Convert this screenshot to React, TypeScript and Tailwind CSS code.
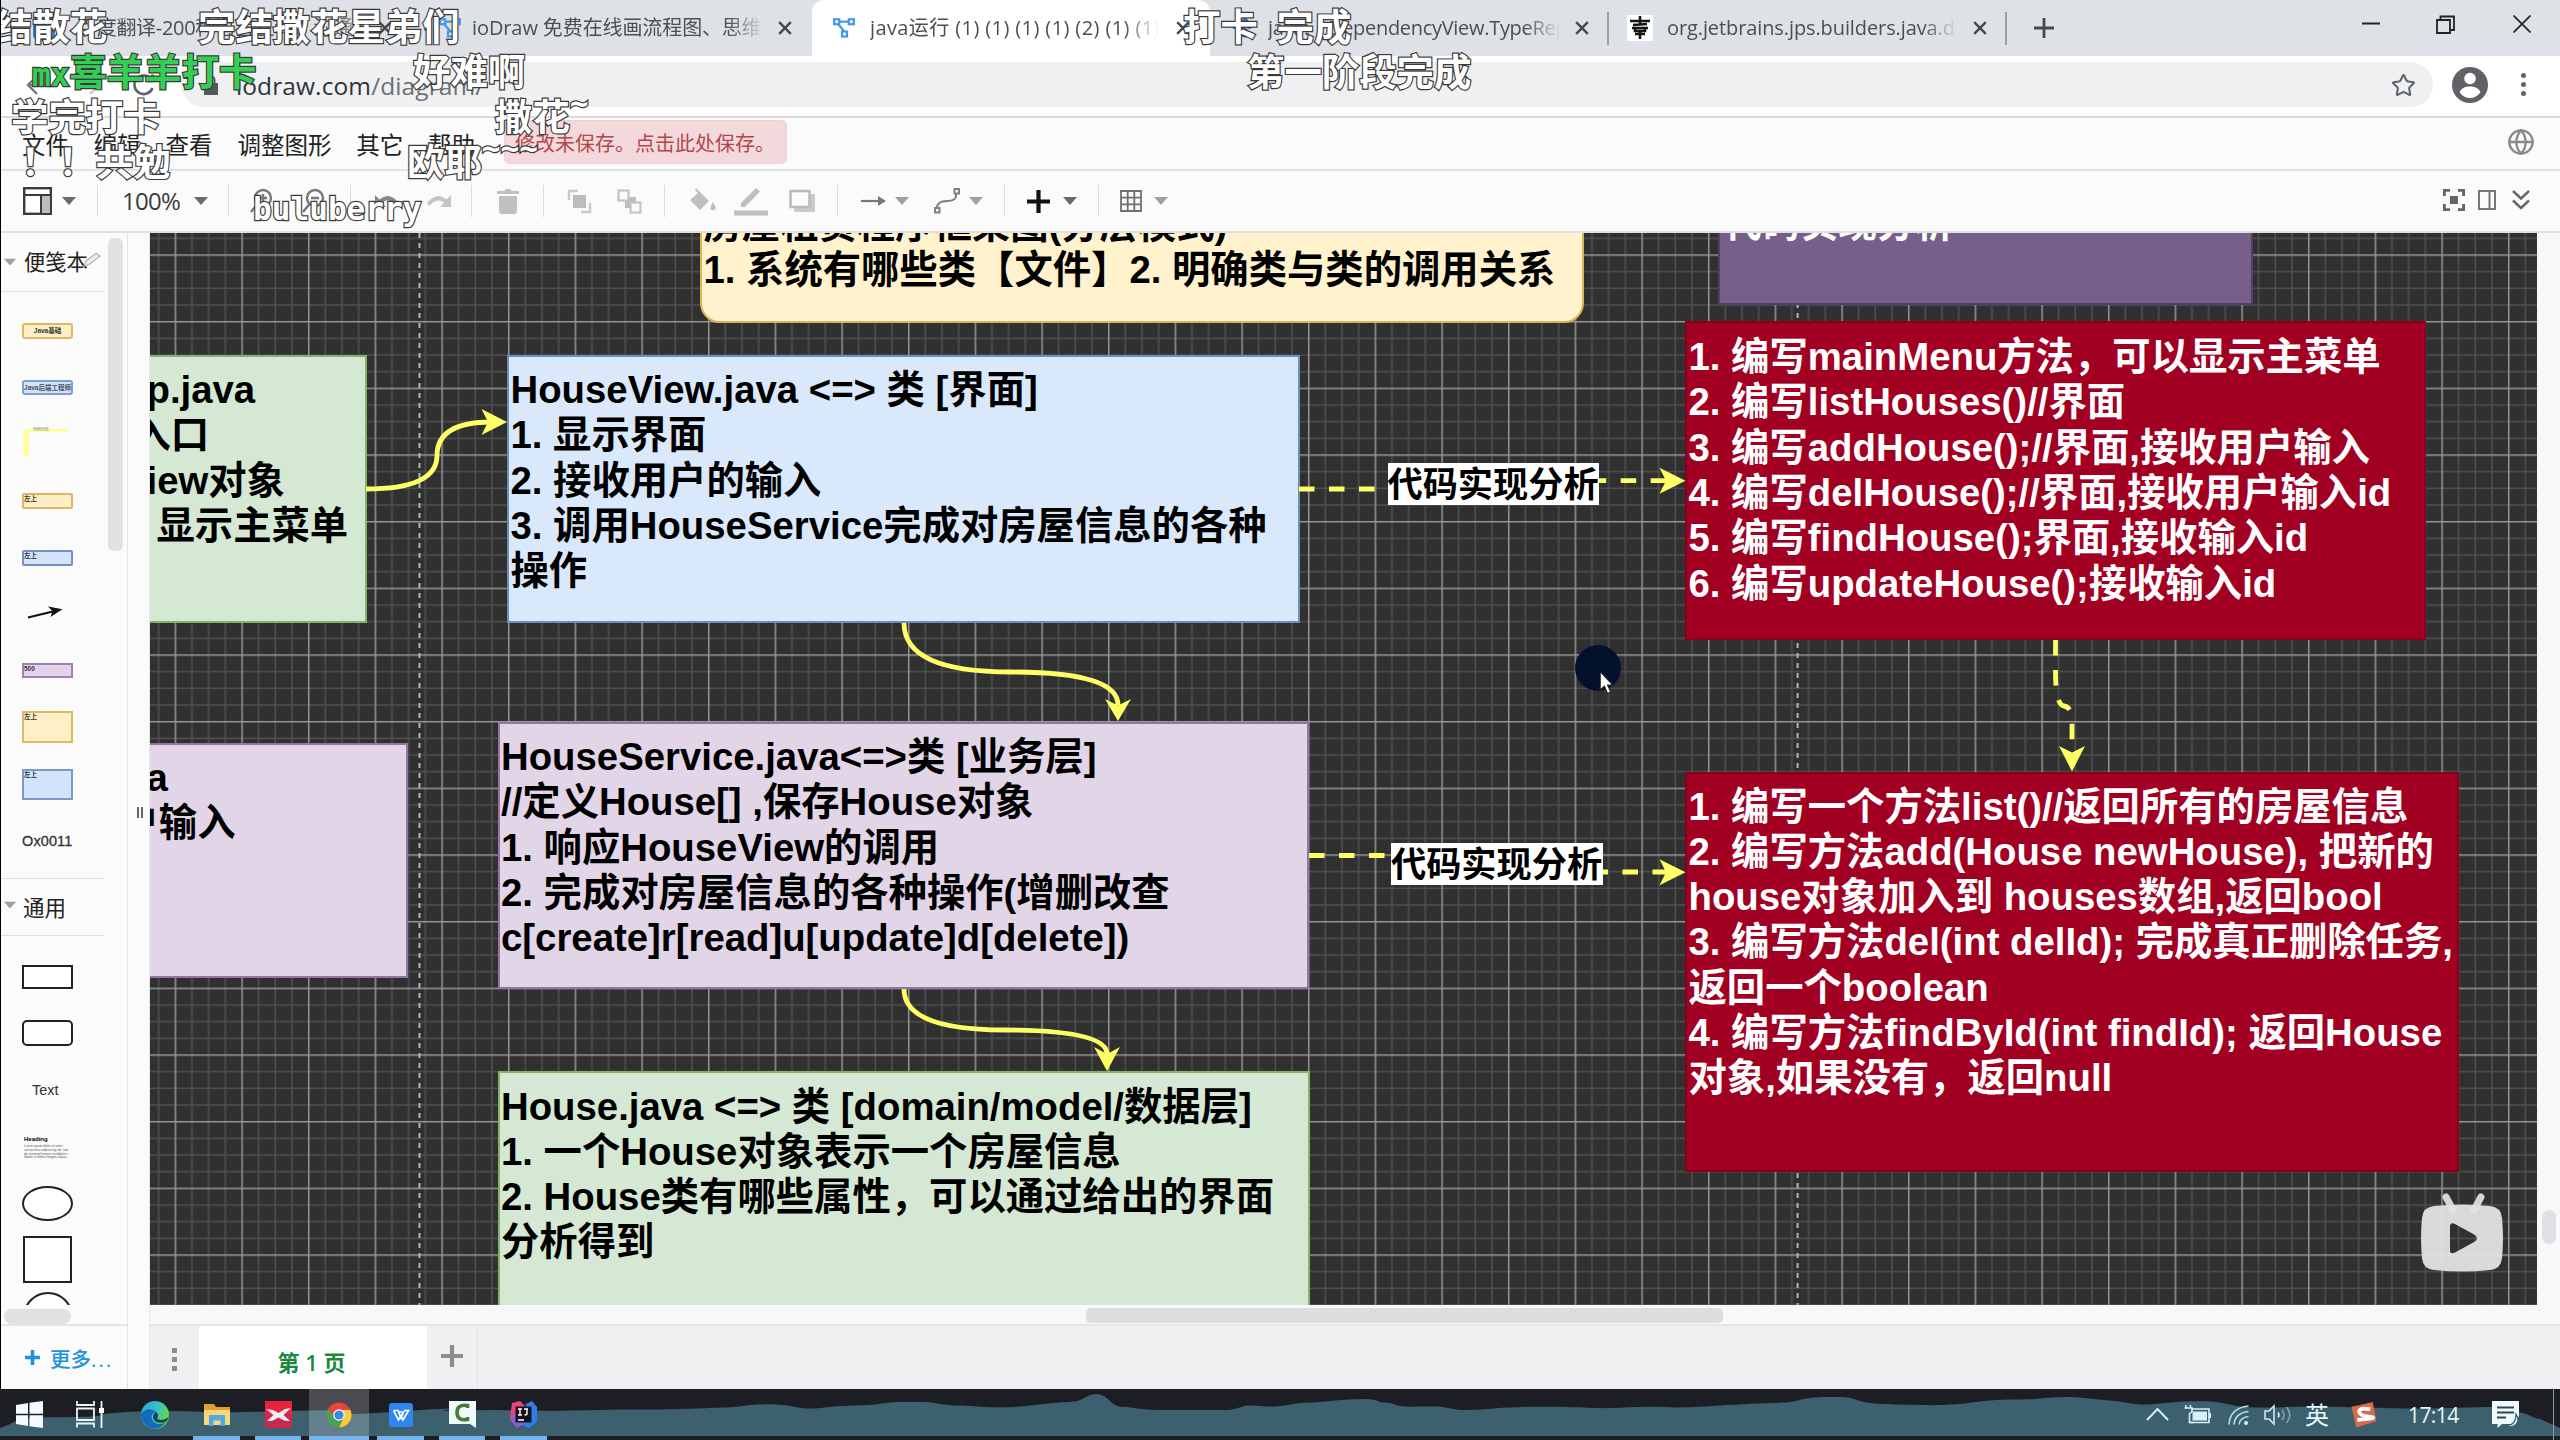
import React from "react";
import { Globe, Star } from "lucide-react";

const UI = "font-['Open_Sans','Noto_Sans_CJK_SC',sans-serif]";

/* ---------- shared bits ---------- */

function Caret({ className = "", dark = false }: { className?: string; dark?: boolean }) {
  return (
    <svg viewBox="0 0 14 8" className={`block h-[8px] w-[14px] shrink-0 ${className}`}>
      <path d="M0 0H14L7 8Z" fill={dark ? "#6b6b6b" : "#a0a0a0"} />
    </svg>
  );
}

function CloseX({ className = "" }: { className?: string }) {
  return (
    <svg viewBox="0 0 14 14" className={`block h-[14px] w-[14px] shrink-0 ${className}`}>
      <path d="M1.2 1.2L12.8 12.8M12.8 1.2L1.2 12.8" stroke="#45484c" strokeWidth="2.4" />
    </svg>
  );
}

function DrawLogo({ className = "" }: { className?: string }) {
  return (
    <svg viewBox="0 0 22 20" className={`block h-[20px] w-[22px] shrink-0 ${className}`} fill="none" stroke="#3d9be9" strokeWidth="2.2">
      <rect x="1.2" y="1.2" width="5" height="5" />
      <rect x="15.8" y="1.2" width="5" height="5" />
      <rect x="9" y="13.5" width="5" height="5" />
      <path d="M6 3.7H16M5 6L11.5 13.5" />
    </svg>
  );
}

/* ---------- browser chrome ---------- */

function TabStrip() {
  const title = "overflow-hidden whitespace-nowrap text-[20px] leading-[30px] text-[#4b4e53]";
  const fade = "[mask-image:linear-gradient(to_right,black_88%,transparent)]";
  return (
    <div className={`flex h-[56px] w-full shrink-0 bg-[#dee1e6] ${UI}`}>
      <div className="flex w-[431px] items-center">
        <div className="ml-[33px] h-[22px] w-[22px] rounded-sm bg-[#2f7fd8]" />
        <div className={`ml-[22px] w-[292px] tracking-[-0.3px] ${title} ${fade}`}>百度翻译-200种语言互译、沟通全世界</div>
        <CloseX className="ml-[9px]" />
      </div>
      <div className="flex w-[381px] items-center">
        <DrawLogo className="ml-[8px]" />
        <div className={`ml-[11px] w-[291px] tracking-[-0.1px] ${title} ${fade}`}>ioDraw 免费在线画流程图、思维导图</div>
        <CloseX className="ml-[15px]" />
      </div>
      <div className="flex w-[398px] items-center rounded-t-[12px] bg-white">
        <DrawLogo className="ml-[21px]" />
        <div className={`ml-[15px] w-[289px] tracking-[0.4px] ${title} ${fade}`}>java运行 (1) (1) (1) (1) (2) (1) (1)</div>
        <CloseX className="ml-[17px]" />
      </div>
      <div className="flex w-[397px] items-center">
        <svg viewBox="0 0 22 22" className="ml-[21px] h-[22px] w-[22px] shrink-0">
          <g fill="#2b6be0">
            <circle cx="4" cy="9" r="3" />
            <circle cx="8.5" cy="4" r="3" />
            <circle cx="14" cy="4" r="3" />
            <circle cx="18.3" cy="9" r="3" />
            <path d="M11 9C8 9 3 14 4 18C5 22 9 20 11 20S17 22 18 18C19 14 14 9 11 9Z" />
          </g>
        </svg>
        <div className={`ml-[15px] w-[292px] tracking-[-0.3px] [word-spacing:14px] ${title} ${fade}`}>java: DependencyView.TypeRepr</div>
        <CloseX className="ml-[15px]" />
      </div>
      <div className="flex w-[400px] items-center">
        <div className="h-[33px] w-[2px] bg-[#9b9ea3]" />
        <svg viewBox="0 0 26 26" className="ml-[18px] h-[26px] w-[26px] shrink-0 bg-white">
          <path d="M3 6H23M13 1V10M6 10L20 9M5 13H21M8 13V16H18V13M13 16V24M8 19H18" stroke="#151515" strokeWidth="2.6" fill="none" />
        </svg>
        <div className={`ml-[14px] w-[291px] tracking-[-0.1px] ${title} ${fade}`}>org.jetbrains.jps.builders.java.depe</div>
        <CloseX className="ml-[16px]" />
        <div className="ml-[18px] h-[33px] w-[2px] bg-[#9b9ea3]" />
      </div>
      <svg viewBox="0 0 22 22" className="ml-[26px] mt-[17px] h-[22px] w-[22px] shrink-0">
        <path d="M11 1V21M1 11H21" stroke="#45484c" strokeWidth="2.8" />
      </svg>
      <div className="ml-auto mr-[29px] mt-[15px] flex">
        <svg viewBox="0 0 18 20" className="h-[20px] w-[18px]">
          <path d="M0 8.5H18" stroke="#222" strokeWidth="2" />
        </svg>
        <svg viewBox="0 0 19 20" className="ml-[56px] h-[20px] w-[19px]" fill="none" stroke="#222" strokeWidth="1.8">
          <path d="M1 5H14V18H1ZM4.500 5V1.500H18V15H14" />
        </svg>
        <svg viewBox="0 0 18 18" className="ml-[58px] h-[18px] w-[18px]">
          <path d="M0.500 0.500L17.500 17.500M17.500 0.500L0.500 17.500" stroke="#222" strokeWidth="1.700" />
        </svg>
      </div>
    </div>
  );
}

function AddressBar() {
  return (
    <div className={`flex h-[62px] shrink-0 items-center border-b-2 border-[#dadbdd] bg-white pb-[3px] ${UI}`}>
      <div className="flex w-[181px] items-center">
        <svg viewBox="0 0 24 22" className="ml-[26px] h-[22px] w-[24px]" fill="none" stroke="#77797d" strokeWidth="2.4">
          <path d="M22 11H2M11 2L2 11L11 20" />
        </svg>
        <svg viewBox="0 0 24 22" className="ml-[27px] h-[22px] w-[24px]" fill="none" stroke="#c9cbce" strokeWidth="2.4">
          <path d="M2 11H22M13 2L22 11L13 20" />
        </svg>
        <svg viewBox="0 0 24 24" className="ml-[31px] h-[24px] w-[24px]" fill="none" stroke="#5f6368" strokeWidth="2.6">
          <path d="M20.500 15A9.300 9.300 0 1 1 19 6M20.500 1.500V8H14" />
        </svg>
      </div>
      <div className="flex h-[45px] w-[2252px] items-center rounded-full bg-[#eff0f2]">
        <svg viewBox="0 0 14 20" className="ml-[23px] h-[20px] w-[14px]">
          <rect y="8" width="14" height="12" fill="#55585c" />
          <path d="M3.500 8V5a3.500 3.500 0 0 1 7 0V8" fill="none" stroke="#55585c" strokeWidth="2" />
        </svg>
        <div className="ml-[18px] mt-[2px] whitespace-nowrap text-[24.5px] leading-[30px] tracking-[0.1px] text-[#313438]">
          iodraw.com<span className="text-[#6c7075]">/diagram/</span>
        </div>
        <Star className="ml-auto mr-[17px] mt-[2px] h-[25px] w-[25px] text-[#5f6368]" strokeWidth={2} />
      </div>
      <svg viewBox="0 0 36 36" className="ml-[19px] mt-[1px] h-[36px] w-[36px]">
        <circle cx="18" cy="18" r="18" fill="#5f6368" />
        <circle cx="18" cy="11.500" r="5.800" fill="#fff" />
        <path d="M7.500 25C10 20.500 14 19.500 18 19.500S26 20.500 28.500 25C26 29 22 31 18 31S10 29 7.500 25Z" fill="#fff" />
      </svg>
      <div className="ml-[33px] flex flex-col gap-[4.500px]">
        <div className="h-[4.500px] w-[4.500px] rounded-full bg-[#5f6368]" />
        <div className="h-[4.500px] w-[4.500px] rounded-full bg-[#5f6368]" />
        <div className="h-[4.500px] w-[4.500px] rounded-full bg-[#5f6368]" />
      </div>
    </div>
  );
}

/* ---------- editor menu and toolbar ---------- */

function MenuBar() {
  return (
    <div className={`flex h-[53px] shrink-0 items-center border-b-2 border-[#e2e2e3] bg-[#fbfbfb] ${UI}`}>
      <div className="mt-[3px] flex w-[504px] items-center gap-[24.800px] whitespace-nowrap pl-[22px] text-[23.500px] leading-[34px] text-[#222]">
        <span>文件</span>
        <span>编辑</span>
        <span>查看</span>
        <span>调整图形</span>
        <span>其它</span>
        <span>帮助</span>
      </div>
      <div className="mt-[-3px] flex h-[44px] w-[283px] items-center whitespace-nowrap rounded-[5px] border border-[#f0d0d3] bg-[#f4d9dc] pl-[10px] pt-[4px] text-[20px] leading-[30px] text-[#b2474a]">
        修改未保存。点击此处保存。
      </div>
      <Globe className="mb-[4px] ml-auto mr-[25px] h-[28px] w-[28px] text-[#8a8a8a]" strokeWidth={2} />
    </div>
  );
}

function Sep() {
  return <div className="h-[32px] w-px shrink-0 bg-[#dcdcdc]" />;
}

function Toolbar() {
  return (
    <div className={`flex h-[62px] shrink-0 items-center border-b-2 border-[#e0e0e1] bg-[#fbfbfb] ${UI}`}>
      <div className="flex w-[97px] items-center">
        <svg viewBox="0 0 29 28" className="ml-[23px] h-[28px] w-[29px]">
          <rect x="1.200" y="1.200" width="26.600" height="25.600" fill="#fff" stroke="#3c3c3c" strokeWidth="2.400" />
          <path d="M1 8H28M18 8V27" stroke="#3c3c3c" strokeWidth="2" />
          <rect x="19" y="9" width="8" height="17" fill="#bdbdbd" />
        </svg>
        <Caret dark className="ml-[10px]" />
      </div>
      <Sep />
      <div className="flex w-[130px] items-center">
        <div className="ml-[24px] w-[60px] whitespace-nowrap text-[24px] leading-[34px] tracking-[-0.700px] text-[#3a3a3a]">100%</div>
        <Caret dark className="ml-[12px]" />
      </div>
      <Sep />
      <div className="flex w-[121px] items-center">
        <svg viewBox="0 0 26 26" className="ml-[20px] h-[26px] w-[26px]" fill="none" stroke="#777" strokeWidth="2.400">
          <circle cx="14" cy="10" r="8" />
          <path d="M8.500 16L2 24M10 10H18M14 6V14" />
        </svg>
        <svg viewBox="0 0 26 26" className="ml-[26px] h-[26px] w-[26px]" fill="none" stroke="#777" strokeWidth="2.400">
          <circle cx="14" cy="10" r="8" />
          <path d="M8.500 16L2 24M10 10H18" />
        </svg>
      </div>
      <Sep />
      <div className="flex w-[120px] items-center">
        <svg viewBox="0 0 24 16" className="ml-[24px] h-[16px] w-[24px]">
          <path d="M0 2V14H11L7 10Q13 4 22 13L24 10Q14 -2 4.500 6.500Z" fill="#888" />
        </svg>
        <svg viewBox="0 0 24 16" className="ml-[28px] h-[16px] w-[24px]">
          <path d="M24 2V14H13L17 10Q11 4 2 13L0 10Q10 -2 19.500 6.500Z" fill="#c4c4c4" />
        </svg>
      </div>
      <Sep />
      <div className="flex w-[71px] justify-center">
        <svg viewBox="0 0 24 26" className="h-[26px] w-[24px]" fill="#c0c0c0">
          <path d="M1 3H8L10 1H14L16 3H23V6H1ZM3 8H21V23Q21 26 18 26H6Q3 26 3 23Z" />
        </svg>
      </div>
      <Sep />
      <div className="flex w-[120px] items-center">
        <svg viewBox="0 0 25 25" className="ml-[23px] h-[25px] w-[25px]">
          <path d="M2 11V2H11M14 23H23V14" fill="none" stroke="#c9c9c9" strokeWidth="2.400" />
          <rect x="6" y="6" width="13" height="13" fill="#bdbdbd" />
        </svg>
        <svg viewBox="0 0 25 25" className="ml-[25px] h-[25px] w-[25px]">
          <rect x="8" y="8" width="11" height="11" fill="#bdbdbd" />
          <rect x="1.500" y="1.500" width="10" height="10" fill="#fbfbfb" stroke="#c4c4c4" strokeWidth="2.200" />
          <rect x="13.500" y="13.500" width="10" height="10" fill="#fbfbfb" stroke="#c4c4c4" strokeWidth="2.200" />
        </svg>
      </div>
      <Sep />
      <div className="flex w-[172px] items-center">
        <svg viewBox="0 0 28 26" className="ml-[24px] h-[26px] w-[28px]" fill="#bfbfbf">
          <path d="M7 0L20 13L11 22L1 12L9 5L6 2ZM24 14Q28 20 26 21.500Q24 23 22 21.500Q20.500 20 24 14Z" />
        </svg>
        <svg viewBox="0 0 34 30" className="ml-[17px] h-[30px] w-[34px]" fill="#bfbfbf">
          <path d="M7 21V17L22 2L26 5.500L11 21Z" />
          <rect y="24.500" width="34" height="5" />
        </svg>
        <svg viewBox="0 0 26 24" className="ml-[21px] h-[24px] w-[26px]">
          <rect x="5" y="5" width="21" height="18" fill="#c9c9c9" />
          <rect x="1.500" y="2" width="19" height="16" fill="#fbfbfb" stroke="#bcbcbc" strokeWidth="2.600" />
        </svg>
      </div>
      <Sep />
      <div className="flex w-[166px] items-center">
        <svg viewBox="0 0 25 10" className="ml-[23px] h-[10px] w-[25px]">
          <path d="M0 5H20" stroke="#777" strokeWidth="2.200" />
          <path d="M17 0L25 5L17 10Z" fill="#777" />
        </svg>
        <Caret className="ml-[9px]" />
        <svg viewBox="0 0 26 26" className="ml-[25px] h-[26px] w-[26px]" fill="none" stroke="#808080" strokeWidth="2">
          <rect x="1" y="20" width="4.500" height="4.500" />
          <rect x="20.500" y="1" width="4.500" height="4.500" />
          <path d="M3 20Q3 13 13 13T22 6" />
        </svg>
        <Caret className="ml-[9px]" />
      </div>
      <Sep />
      <div className="flex w-[93px] items-center">
        <svg viewBox="0 0 23 23" className="ml-[22px] h-[23px] w-[23px]">
          <path d="M11.500 0V23M0 11.500H23" stroke="#111" strokeWidth="4.200" />
        </svg>
        <Caret dark className="ml-[13px]" />
      </div>
      <Sep />
      <svg viewBox="0 0 22 22" className="ml-[21px] h-[22px] w-[22px]" fill="none" stroke="#707070" strokeWidth="1.800">
        <path d="M1 1H21V21H1ZM1 7.700H21M1 14.300H21M7.700 1V21M14.300 1V21" />
      </svg>
      <Caret className="ml-[12px]" />
      <svg viewBox="0 0 22 22" className="ml-auto h-[22px] w-[22px] -translate-y-px" fill="none" stroke="#666" strokeWidth="2.800">
        <path d="M1.400 7V1.400H7M15 1.400H20.600V7M20.600 15V20.600H15M7 20.600H1.400V15" />
        <rect x="7" y="7" width="8" height="8" fill="#666" stroke="none" />
      </svg>
      <svg viewBox="0 0 18 20" className="ml-[13px] h-[20px] w-[18px] -translate-y-px" fill="none" stroke="#777" strokeWidth="2">
        <path d="M1 1H17V19H1ZM11.500 1V19" />
      </svg>
      <svg viewBox="0 0 18 20" className="ml-[16px] mr-[30px] h-[20px] w-[18px] -translate-y-px" fill="none" stroke="#666" strokeWidth="2.400">
        <path d="M1 1L9 8.500L17 1M1 10.500L9 18L17 10.500" />
      </svg>
    </div>
  );
}

/* ---------- shape palette ---------- */

function Slot({ children }: { children: React.ReactNode }) {
  return <div className="flex h-[56.600px] shrink-0 items-center pl-[22px]">{children}</div>;
}

const mini = "overflow-hidden whitespace-nowrap text-[6.500px] font-bold leading-[8px] text-[#333] font-['Liberation_Sans','Noto_Sans_CJK_SC',sans-serif]";

function Sidebar() {
  return (
    <div className={`flex w-[128px] shrink-0 flex-col border-r border-[#e4e4e6] bg-[#fbfbfb] ${UI}`}>
      <div className="flex h-[1093px] border-b-2 border-[#e4e4e6]">
        <div className="flex w-[104px] flex-col">
          <div className="flex h-[1072px] flex-col overflow-hidden">
            <div className="flex h-[59px] shrink-0 items-center border-b border-[#dedee0] pl-[3px]">
              <Caret className="scale-90" />
              <div className="ml-[7px] mt-[-1px] whitespace-nowrap text-[21.300px] leading-[32px] text-[#222]">便笺本</div>
              <svg viewBox="0 0 18 16" className="ml-[-5px] mt-[-4px] h-[16px] w-[18px] shrink-0" fill="#f0f0f0" stroke="#b4b4b4" strokeWidth="1.300">
                <path d="M1 14L3 9L13 1.500L17 4L6 12.500Z" />
              </svg>
            </div>
            <div className="h-[11px] shrink-0" />
            <Slot>
              <div className={`flex h-[16px] w-[51px] items-center justify-center rounded-[3px] border-2 border-[#dfbb5f] bg-[#fff0c6] ${mini}`}>Java基础</div>
            </Slot>
            <Slot>
              <div className={`flex h-[15px] w-[51px] items-center justify-center rounded-[3px] border-2 border-[#7f9fd0] bg-[#d3e3fb] text-[#456] ${mini}`}>Java后端工程师</div>
            </Slot>
            <Slot>
              <svg viewBox="0 0 50 34" className="h-[34px] w-[50px]">
                <rect x="1" y="3" width="6" height="27" fill="#ffffa0" />
                <rect x="4" y="2" width="43" height="2.500" fill="#ffff8c" />
                <text x="11" y="4" fontSize="4" fill="#777" fontFamily="Noto Sans CJK SC">代码分析</text>
              </svg>
            </Slot>
            <Slot>
              <div className={`h-[16px] w-[51px] rounded-[2px] border-2 border-[#dcb466] bg-[#ffedc4] ${mini}`}>左上</div>
            </Slot>
            <Slot>
              <div className={`h-[16px] w-[51px] rounded-[2px] border-2 border-[#7591c4] bg-[#d4e2fb] ${mini}`}>左上</div>
            </Slot>
            <Slot>
              <svg viewBox="0 0 36 14" className="ml-[5px] mt-[-3px] h-[14px] w-[36px]">
                <path d="M1 11.500L28 5" stroke="#111" strokeWidth="2.200" />
                <path d="M35.500 3.200L21 0.500L25.500 5.300L23.500 11Z" fill="#111" />
              </svg>
            </Slot>
            <Slot>
              <div className={`h-[15px] w-[51px] border-2 border-[#9f80ae] bg-[#e3d3ea] ${mini}`}>500</div>
            </Slot>
            <Slot>
              <div className={`h-[32px] w-[51px] border-2 border-[#dcbb60] bg-[#fff0c8] ${mini}`}>左上</div>
            </Slot>
            <Slot>
              <div className={`h-[31px] w-[51px] border-2 border-[#7d9ac4] bg-[#d2e4fb] ${mini}`}>左上</div>
            </Slot>
            <Slot>
              <div className="whitespace-nowrap text-[14.500px] leading-[20px] tracking-[0.1px] text-[#333] [-webkit-text-stroke:0.3px_#333] font-['Liberation_Sans',sans-serif]">Ox0011</div>
            </Slot>
            <div className="h-[10px] shrink-0 border-b border-[#dedee0]" />
            <div className="flex h-[57.500px] shrink-0 items-center border-b border-[#dedee0] pl-[3px]">
              <Caret className="-mt-1 scale-90" />
              <div className="ml-[6px] mt-[1px] whitespace-nowrap text-[21.500px] leading-[32px] text-[#222]">通用</div>
            </div>
            <div className="h-[12px] shrink-0" />
            <Slot>
              <div className="h-[24px] w-[51px] border-2 border-[#222] bg-white" />
            </Slot>
            <Slot>
              <div className="h-[26px] w-[51px] rounded-[5px] border-2 border-[#222] bg-white" />
            </Slot>
            <Slot>
              <div className="ml-[10px] text-[14.500px] leading-[20px] text-[#333] font-['Liberation_Sans',sans-serif]">Text</div>
            </Slot>
            <Slot>
              <div className="ml-[2px] mt-[2px] w-[44px] overflow-hidden whitespace-nowrap font-['Liberation_Sans',sans-serif]">
                <div className="text-[6px] font-bold leading-[8px] text-black">Heading</div>
                <div className="mt-[2px] text-[3.200px] leading-[3.800px] text-[#555]">
                  Lorem ipsum dolor sit amet,
                  <br />
                  consectetur adipisicing elit, sed
                  <br />
                  do eiusmod tempor incididunt ut
                  <br />
                  labore et dolore magna aliqua.
                </div>
              </div>
            </Slot>
            <Slot>
              <div className="h-[35px] w-[51px] rounded-[50%] border-2 border-[#222] bg-white" />
            </Slot>
            <Slot>
              <div className="ml-[1px] h-[47px] w-[49px] border-2 border-[#222] bg-white" />
            </Slot>
            <div className="ml-[23px] mt-[4px] h-[50px] w-[50px] shrink-0 rounded-full border-2 border-[#222] bg-white" />
          </div>
          <div className="ml-[4px] mt-[4px] h-[15px] w-[67px] rounded-full bg-[#e0e0e0]" />
        </div>
        <div className="ml-[4px] mt-[5px] h-[313px] w-[15px] rounded-[6px] bg-[#e1e1e1]" />
      </div>
      <div className="flex h-[63px] items-center whitespace-nowrap pl-[25px] text-[20.500px] font-medium leading-[30px] text-[#2191de]">
        <svg viewBox="0 0 15 15" className="mr-[10px] h-[15px] w-[15px]">
          <path d="M7.500 0V15M0 7.500H15" stroke="#2191de" strokeWidth="3.600" />
        </svg>
        <span className="mt-[2px]">更多<span className="tracking-[2px]">...</span></span>
      </div>
    </div>
  );
}

/* ---------- diagram canvas ---------- */

const block = "absolute whitespace-nowrap border-2 pl-[1.500px] text-[38.350px] font-bold leading-[45.330px] font-['Liberation_Sans','Noto_Sans_CJK_SC',sans-serif]";

function Lines({ rows }: { rows: string[] }) {
  return (
    <>
      {rows.map((r) => (
        <div key={r}>{r}</div>
      ))}
    </>
  );
}

function Grid() {
  return (
    <svg className="absolute inset-0 h-full w-full">
      <defs>
        <pattern id="grid" x="24.600" y="21.300" width="66.667" height="66.667" patternUnits="userSpaceOnUse">
          <path d="M17.370 0V66.700M34.030 0V66.700M50.700 0V66.700M0 17.370H66.700M0 34.030H66.700M0 50.700H66.700" stroke="#505050" strokeWidth="1.500" />
          <path d="M0.800 0V66.700M0 0.800H66.700" stroke="#969696" strokeWidth="1.500" />
        </pattern>
      </defs>
      <rect width="100%" height="100%" fill="#303030" />
      <rect width="100%" height="100%" fill="url(#grid)" />
      <path d="M269.500 0V1072M1647.600 0V1072" stroke="#b4b4b4" strokeWidth="2" strokeDasharray="5 5" />
    </svg>
  );
}

function Edges() {
  return (
    <svg viewBox="150 233 2387 1072" className="absolute inset-0 h-full w-full" fill="none">
      <g stroke="#ffff66" strokeWidth="4.800">
        <path d="M366 489Q437 489 437 455.500Q437 422 492 422" />
        <path d="M904 623Q904 672 1010.700 672Q1118 672 1118 705" />
        <path d="M904 989Q904 1030 1005 1030Q1107 1030 1107 1054" />
        <path d="M1299 489H1492V480.700H1668" strokeDasharray="15.500 14.500" />
        <path d="M1309 855.500H1497V872H1668" strokeDasharray="15.500 14.500" />
        <path d="M2055.500 640V672Q2055.500 705 2064 706Q2072 707 2072 722V754" strokeDasharray="15.500 14.500" />
      </g>
      <g fill="#ffff66">
        <path d="M507 422L481.500 409L488 422L481.500 435Z" />
        <path d="M1118 721L1105 699L1118 705.500L1131 699Z" />
        <path d="M1107 1071L1094 1047L1107 1054L1120 1047Z" />
        <path d="M1685.500 480.700L1659.500 467.700L1666 480.700L1659.500 493.700Z" />
        <path d="M1685.500 872.300L1659.500 859.300L1666 872.300L1659.500 885.300Z" />
        <path d="M2072 771.500L2059 746L2072 752.500L2085 746Z" />
      </g>
    </svg>
  );
}

const edgeLabel = "absolute h-[42px] w-[211.500px] whitespace-nowrap bg-white text-[35.200px] font-bold leading-[37px] text-black font-['Noto_Sans_CJK_SC',sans-serif]";

function Canvas() {
  return (
    <div className="relative h-[1072px] w-[2387px] overflow-hidden bg-[#303030]">
      <Grid />
      <div className={`${block} left-[550px] top-[-60px] h-[150px] w-[884px] rounded-[20px] border-[#d6b656] bg-[#fff2cc] pt-[26.500px] text-black`}>
        <Lines rows={["房屋租赁程序框架图(分层模式)", "1. 系统有哪些类【文件】2. 明确类与类的调用关系"]} />
      </div>
      <div className={`${block} left-[1568px] top-[-60px] h-[132px] w-[535px] border-[#563c6d] bg-[#76608a] pt-[25.500px] text-white`}>
        <div className="ml-[2px]">代码实现分析</div>
      </div>
      <div className={`${block} left-[-300px] top-[121.500px] h-[268px] w-[517px] border-[#82b366] bg-[#d5e8d4] pt-[10.500px] text-black`}>
        <div className="ml-[293px]">p.java</div>
        <div className="ml-[279px]">入口</div>
        <div className="ml-[293px]">iew对象</div>
        <div className="ml-[303px]">显示主菜单</div>
      </div>
      <div className={`${block} left-[-300px] top-[510px] h-[235px] w-[558px] border-[#9673a6] bg-[#e1d5e7] pt-[9.500px] text-black`}>
        <div className="ml-[293px]">a</div>
        <div className="ml-[267px]">户输入</div>
      </div>
      <div className={`${block} left-[357px] top-[121.500px] h-[268px] w-[792.500px] border-[#6c8ebf] bg-[#dae8fc] pt-[10.500px] text-black`}>
        <Lines rows={["HouseView.java <=> 类 [界面]", "1. 显示界面", "2. 接收用户的输入", "3. 调用HouseService完成对房屋信息的各种", "操作"]} />
      </div>
      <div className={`${block} left-[347.500px] top-[489px] h-[267px] w-[811.500px] border-[#9673a6] bg-[#e1d5e7] pt-[10px] text-black`}>
        <Lines rows={["HouseService.java<=>类 [业务层]", "//定义House[] ,保存House对象", "1. 响应HouseView的调用", "2. 完成对房屋信息的各种操作(增删改查", "c[create]r[read]u[update]d[delete])"]} />
      </div>
      <div className={`${block} left-[347.500px] top-[838px] h-[300px] w-[812.500px] border-[#82b366] bg-[#d5e8d4] pt-[10.500px] text-black`}>
        <Lines rows={["House.java <=> 类 [domain/model/数据层]", "1. 一个House对象表示一个房屋信息", "2. House类有哪些属性，可以通过给出的界面", "分析得到"]} />
      </div>
      <div className={`${block} left-[1535px] top-[88px] h-[318.500px] w-[740.500px] border-[#8a001c] bg-[#a20022] pt-[11px] text-white`}>
        <Lines rows={["1. 编写mainMenu方法，可以显示主菜单", "2. 编写listHouses()//界面", "3. 编写addHouse();//界面,接收用户输入", "4. 编写delHouse();//界面,接收用户输入id", "5. 编写findHouse();界面,接收输入id", "6. 编写updateHouse();接收输入id"]} />
      </div>
      <div className={`${block} left-[1535px] top-[538.500px] h-[400.500px] w-[773.500px] border-[#8a001c] bg-[#a20022] pt-[10px] text-white`}>
        <Lines rows={["1. 编写一个方法list()//返回所有的房屋信息", "2. 编写方法add(House newHouse), 把新的", "house对象加入到 houses数组,返回bool", "3. 编写方法del(int delId); 完成真正删除任务,", "返回一个boolean", "4. 编写方法findById(int findId); 返回House", "对象,如果没有，返回null"]} />
      </div>
      <Edges />
      <div className={`${edgeLabel} left-[1237.500px] top-[229.500px]`}>代码实现分析</div>
      <div className={`${edgeLabel} left-[1241px] top-[609.500px]`}>代码实现分析</div>
      <div className="absolute left-[1425px] top-[412px] h-[46px] w-[46px] rounded-full bg-[#03112c]" />
      <svg viewBox="0 0 14 22" className="absolute left-[1449px] top-[438px] h-[23px] w-[15px]">
        <path d="M1 0.500V18L5 14.500L8 21.500L11 20L8 13.500H13Z" fill="#fff" stroke="#222" strokeWidth="1" />
      </svg>
      <svg viewBox="0 0 82 80" className="absolute left-[2271px] top-[960px] h-[80px] w-[82px]">
        <path d="M25 4L32 17M60 4L53 17" stroke="#e3e3e3" strokeWidth="7" strokeLinecap="round" opacity="0.920" />
        <path d="M13 13Q41 10 69 13Q80 14 81 25Q83 45 81 65Q80 76 69 77Q41 80 13 77Q2 76 1 65Q-1 45 1 25Q2 14 13 13ZM34 31Q29 28.500 29 34V57Q29 62 34 59.500L54 48.500Q58 45.500 54 42Z" fill="#e3e3e3" fillRule="evenodd" opacity="0.950" />
      </svg>
    </div>
  );
}

function Workspace() {
  return (
    <div className="flex h-[1156px] shrink-0">
      <Sidebar />
      <div className="flex w-[22px] shrink-0 items-start border-r border-[#e8e8ea] bg-[#fbfbfc]">
        <div className="ml-[9px] mt-[574px] flex gap-[2.500px]">
          <div className="h-[11px] w-[1.500px] bg-[#666]" />
          <div className="h-[11px] w-[1.500px] bg-[#666]" />
        </div>
      </div>
      <div className="flex w-[2410px] flex-col bg-[#f7f8fa]">
        <div className="flex">
          <Canvas />
          <div className="flex w-[23px] justify-center pt-[977px]">
            <div className="h-[34px] w-[14px] rounded-full bg-[#dfe0e3]" />
          </div>
        </div>
        <div className="h-[21px] border-b-2 border-[#e4e5e7] pt-[3px]">
          <div className="ml-[936px] h-[15px] w-[637px] rounded-[5px] bg-[#dcdddf]" />
        </div>
        <div className={`flex h-[63px] bg-[#eff0f2] ${UI}`}>
          <div className="flex w-[49px] flex-col items-center justify-center gap-[4px] pt-[4px]">
            <div className="h-[5px] w-[5px] bg-[#8c8c8c]" />
            <div className="h-[5px] w-[5px] bg-[#8c8c8c]" />
            <div className="h-[5px] w-[5px] bg-[#8c8c8c]" />
          </div>
          <div className="flex w-[228px] items-center justify-center whitespace-nowrap bg-white pr-[3px] pt-[8px] text-[22px] font-semibold leading-[30px] text-[#1c8741]">第 1 页</div>
          <div className="flex w-[51px] justify-center border-r border-[#e4e5e8] pt-[19px]">
            <svg viewBox="0 0 22 22" className="h-[22px] w-[22px]">
              <path d="M11 0V22M0 11H22" stroke="#8d8d8d" strokeWidth="4.200" />
            </svg>
          </div>
        </div>
      </div>
    </div>
  );
}

/* ---------- taskbar ---------- */

const WAVE =
  "M0 39L8 36L20 30Q40 28 73 28T102 25Q130 22 163 22T204 23T286 22T347 23.500T408 22T441 21.500L453 22Q470 21 498 21C530 22 560 22 600 21S650 21 680 20S710 19 725 18.500S745 16 760 15.500S785 16 795 18S815 20 825 18.500S850 17 869 16S880 13 906 13S930 13 940 15S960 16 977 17.500S1020 18 1031 16.500S1050 14 1060 13.500S1075 13 1080 11S1090 5 1096 5S1106 8 1110 12S1118 18 1125 18S1140 21 1160 21S1215 21 1226 21S1240 17 1248 16.500S1265 18 1275 17.500S1295 14 1310 13.500S1345 10 1362 10S1375 13 1385 13.500S1395 17 1405 17.500S1435 17 1443 18S1455 21 1465 21S1490 20 1500 19S1540 17.500 1565 18S1595 19.500 1610 19S1650 17 1665 18S1700 18 1720 16.500S1770 14 1785 13.500S1800 8 1828 8S1850 9 1860 12S1880 15 1920 16S1970 13 1990 11.500S2030 11 2040 9.500S2060 8 2070 8S2100 11 2110 11.500S2130 15 2140 15.500S2170 13 2185 12.500S2215 12 2225 14.500S2240 18 2255 18.500S2290 17.500 2310 17.500S2380 19 2410 19.500S2470 18 2495 18S2510 22 2520 23.500S2532 29 2540 30L2549 34L2560 39V47H0Z";

function TaskIcon({ bar, children, active = false }: { bar: string; children: React.ReactNode; active?: boolean }) {
  return (
    <div className={`relative flex h-[51px] shrink-0 flex-col items-center ${bar} ${active ? "bg-white/20" : ""}`}>
      <div className="flex h-[47px] items-center pt-[4px]">{children}</div>
      <div className="h-[4px] w-full bg-[#76b3ec]" />
    </div>
  );
}

function Taskbar() {
  return (
    <div className={`relative h-[51px] shrink-0 bg-[#1c1e23] ${UI}`}>
      <svg viewBox="0 0 2560 51" className="absolute inset-0 h-[51px] w-[2560px]">
        <path d={WAVE} fill="#3d606e" />
      </svg>
      <div className="relative flex h-[51px] items-start">
        <svg viewBox="0 0 27 27" className="ml-[16px] mt-[12px] h-[27px] w-[27px]" fill="#f2fbff">
          <path d="M0 4L12 2V12.800H0ZM13.500 1.800L27 0V12.800H13.500ZM0 14.200H12V25L0 23ZM13.500 14.200H27V27L13.500 25.200Z" />
        </svg>
        <svg viewBox="0 0 28 28" className="ml-[33px] mt-[11px] h-[28px] w-[28px]" fill="none" stroke="#eaf6fa" strokeWidth="1.800">
          <path d="M1 1V5H18V1M1 8.500H18V20H1ZM1 27.500V23.500H18V27.500M25.500 1V28" />
          <rect x="23" y="8" width="5" height="5" fill="#fff" stroke="none" />
        </svg>
        <svg viewBox="0 0 28 28" className="ml-[37px] mt-[12px] h-[28px] w-[28px]">
          <defs>
            <linearGradient id="edgeA" x1="0" y1="0" x2="1" y2="0.300">
              <stop offset="0" stopColor="#2fa3e0" />
              <stop offset="0.600" stopColor="#35c1c8" />
              <stop offset="1" stopColor="#62d84a" />
            </linearGradient>
          </defs>
          <circle cx="14" cy="14" r="14" fill="url(#edgeA)" />
          <path d="M0 14C2 8 10 6 15 11C11 11 9 16 12 20C15 24 22 24 25.500 20C21 28 12 30 6 25C2 22 0 18 0 14Z" fill="#1668b8" />
          <path d="M15 11C18 13 17 16 16 17.500C18 20 25 19 27.800 15.500C27 18 26.500 19 25.500 20C21 23 14 22 12.500 18C11.500 15 13 12 15 11Z" fill="#1d3d52" />
        </svg>
        <div className="w-[24px] shrink-0" />
        <TaskIcon bar="w-[47px]">
          <svg viewBox="0 0 26 24" className="h-[24px] w-[26px]">
            <path d="M0 1H10L12 4H26V22H0Z" fill="#e0a02a" />
            <path d="M0 7H26V22H0Z" fill="#f6d97a" />
            <path d="M5 12H21V23H16.500V17.500H9.500V23H5Z" fill="#51a9e0" />
          </svg>
        </TaskIcon>
        <div className="w-[15px] shrink-0" />
        <TaskIcon bar="w-[46px]">
          <svg viewBox="0 0 27 27" className="h-[27px] w-[27px]">
            <rect width="27" height="27" fill="#e8233f" />
            <path d="M0 14H27V27H0Z" fill="#c9284f" />
            <path d="M1 8L8 9L13.500 12L20 8L26 7L18.500 14L25 20L19 19.500L13.500 16.500L7 20L2 20L8.500 14Z" fill="#f4eef2" />
          </svg>
        </TaskIcon>
        <div className="w-[8px] shrink-0" />
        <TaskIcon bar="w-[60px]" active>
          <svg viewBox="0 0 26 26" className="h-[26px] w-[26px]">
            <circle cx="13" cy="13" r="12.500" fill="#e5473a" />
            <path d="M2 7A12.500 12.500 0 0 0 12 25.500L17.500 15.500L8 14.500Z" fill="#3fa657" />
            <path d="M13 25.500A12.500 12.500 0 0 0 24.500 8H14L17.800 15.500Z" fill="#f3cf3d" />
            <circle cx="13" cy="13" r="5.800" fill="#fff" />
            <circle cx="13" cy="13" r="4.600" fill="#4285e8" />
          </svg>
        </TaskIcon>
        <div className="w-[8px] shrink-0" />
        <TaskIcon bar="w-[47px]">
          <svg viewBox="0 0 24 24" className="h-[24px] w-[24px]">
            <rect width="24" height="24" rx="3" fill="#2f86ee" />
            <path d="M4.500 7.500H9L12 15L14.500 9H10M4.500 7.500L9.500 17L12 12.500L14 17L19.500 7.500H15" fill="none" stroke="#fff" strokeWidth="1.700" />
          </svg>
        </TaskIcon>
        <div className="w-[15px] shrink-0" />
        <TaskIcon bar="w-[46px]">
          <svg viewBox="0 0 27 27" className="h-[27px] w-[27px]">
            <path d="M0 0H27V27L21 23H0Z" fill="#f0fafa" />
            <path d="M18.500 7V4.500Q8 3 8 11.500T18.500 18.500V16" fill="none" stroke="#4b7a35" strokeWidth="3.600" />
          </svg>
        </TaskIcon>
        <div className="w-[15px] shrink-0" />
        <TaskIcon bar="w-[47px]">
          <svg viewBox="0 0 27 27" className="h-[27px] w-[27px]">
            <path d="M2 2L10 0L15 5L6 26L0 18Z" fill="#e8447e" />
            <path d="M16 3L22 0L27 6V21L19 27L12 24Z" fill="#2f7ef0" />
            <path d="M0 18L6 13L14 23L7 27Z" fill="#8a5fd0" />
            <rect x="5.500" y="5.500" width="16" height="16" fill="#17131c" />
            <path d="M8 8H12M10 8V14M8 14H12M14 8H18M17 8V12.500Q17 14 14.500 14M8 19H14" stroke="#fff" strokeWidth="1.400" fill="none" />
          </svg>
        </TaskIcon>

        <div className="ml-auto flex h-[51px] items-start">
          <svg viewBox="0 0 23 13" className="mt-[19px] h-[13px] w-[23px]" fill="none" stroke="#cfeefa" strokeWidth="2">
            <path d="M1 12L11.500 1L22 12" />
          </svg>
          <svg viewBox="0 0 27 20" className="ml-[15px] mt-[16px] h-[20px] w-[27px]">
            <path d="M2 0V3M6.500 0V3" stroke="#d6f2fb" strokeWidth="1.500" />
            <path d="M0.500 3H8V6.500L5.500 9V17.500H10" fill="none" stroke="#d6f2fb" strokeWidth="1.600" />
            <path d="M8 4H25V17.500H6" fill="none" stroke="#d6f2fb" strokeWidth="1.600" />
            <rect x="8.500" y="6.500" width="14.500" height="9" fill="#d6f2fb" />
            <rect x="25" y="8" width="2" height="5" fill="#d6f2fb" />
          </svg>
          <svg viewBox="0 0 21 20" className="ml-[17px] mt-[16px] h-[20px] w-[21px]" fill="none" stroke="#b9dbe6" strokeWidth="1.700">
            <path d="M1 19.500Q2 3 20.500 1M6 19.500Q7 8 20.500 6.500M11 19.500Q12 12.500 20.500 11.500" />
            <circle cx="18" cy="18" r="2" fill="#d6f2fb" stroke="none" />
          </svg>
          <svg viewBox="0 0 28 22" className="ml-[15px] mt-[15px] h-[22px] w-[28px]" fill="none" stroke="#cfeaf3" strokeWidth="1.600">
            <path d="M1 7H5L10 2V20L5 15H1Z" />
            <path d="M14 8.500Q16 11 14 13.500" />
            <path d="M18 6Q22 11 18 16M22.500 3Q29 11 22.500 19" stroke="#7fa0ac" />
          </svg>
          <div className="ml-[13px] mt-[9px] w-[25px] text-[24px] leading-[34px] text-[#e3f6fd]">英</div>
          <svg viewBox="0 0 28 28" className="ml-[20px] mt-[12px] h-[27px] w-[28px]">
            <path d="M1 6Q11 4 23 1L27 21Q17 24 6 27.500Z" fill="#d9694d" />
            <path d="M20.500 8.500Q9 6.500 9 11T20 16.500T7 19.500" fill="none" stroke="#fff" strokeWidth="4" />
          </svg>
          <div className="ml-[30px] mt-[10px] w-[54px] text-[21px] leading-[32px] tracking-[-0.600px] text-[#e3f6fd]">17:14</div>
          <svg viewBox="0 0 28 28" className="ml-[30px] mt-[11px] h-[28px] w-[28px]">
            <path d="M0 1H27V16L20 24H10L5.500 28V24H0Z" fill="#eefaff" />
            <path d="M5 7.500H22M5 12.500H22M5 17.500H14" stroke="#2f4650" strokeWidth="1.800" />
            <path d="M24 14Q28 20 24 24.500Q20 28.500 15 25.500Q24 25 24 14Z" fill="#d6f2fb" stroke="#3d606e" strokeWidth="1.200" />
          </svg>
          <div className="ml-[33px] mr-[6px] h-[51px] w-px bg-[#8b9aa0]" />
        </div>
      </div>
    </div>
  );
}

/* ---------- scrolling comments over the video ---------- */

const danmu =
  "absolute whitespace-pre text-[37.400px] font-bold leading-[45px] [-webkit-text-stroke:2.4px_#3a3a3a] [paint-order:stroke_fill] font-['Noto_Sans_CJK_SC',sans-serif]";
const mono = "text-[31.100px] font-['DejaVu_Sans_Mono',monospace]";

function Comments() {
  return (
    <div className="pointer-events-none absolute inset-0 overflow-hidden text-white">
      <div className={`${danmu} left-[-5px] top-[3px]`}>结散花</div>
      <div className={`${danmu} left-[198px] top-[3px]`}>完结撒花星弟们</div>
      <div className={`${danmu} left-[1183px] top-[3px]`}>
        打卡<span className={mono}> </span>完成
      </div>
      <div className={`${danmu} left-[32px] top-[48px] text-[#33cf55]`}>
        <span className={mono}>mx</span>喜羊羊打卡
      </div>
      <div className={`${danmu} left-[413px] top-[48px]`}>好难啊</div>
      <div className={`${danmu} left-[1247px] top-[48px]`}>第一阶段完成</div>
      <div className={`${danmu} left-[11px] top-[93px]`}>学完打卡</div>
      <div className={`${danmu} left-[495px] top-[93px]`}>
        撒花<span className={`${mono} relative top-[-17px]`}>~</span>
      </div>
      <div className={`${danmu} left-[21px] top-[138px]`}>！！共勉</div>
      <div className={`${danmu} left-[407px] top-[138px]`}>
        欧耶<span className={`${mono} relative top-[-17px]`}>~~~</span>
      </div>
      <div className={`${danmu} left-[253px] top-[182px]`}>
        <span className={mono}>buluberry</span>
      </div>
    </div>
  );
}

export default function App() {
  return (
    <div className="relative flex h-[1440px] w-[2560px] flex-col overflow-hidden bg-[#fbfbfb]">
      <TabStrip />
      <AddressBar />
      <MenuBar />
      <Toolbar />
      <Workspace />
      <Taskbar />
      <Comments />
      <div className="pointer-events-none absolute left-0 top-0 h-[1389px] w-px bg-black" />
    </div>
  );
}
